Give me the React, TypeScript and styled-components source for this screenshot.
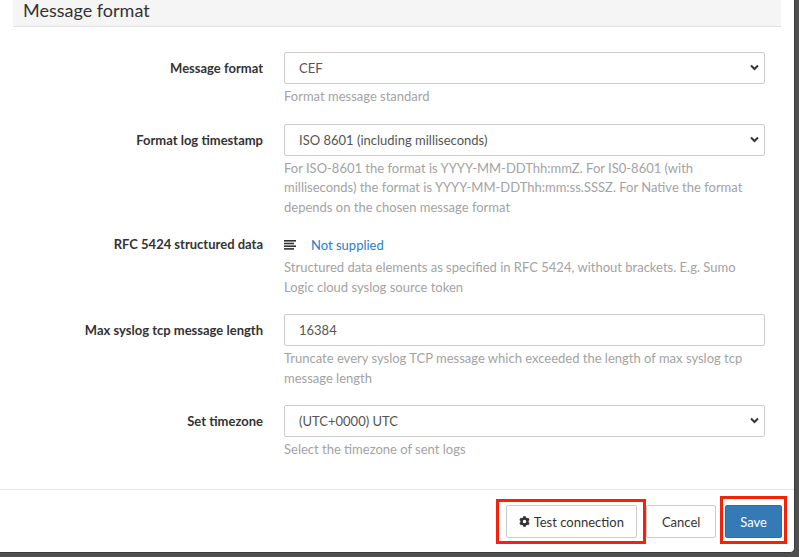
import * as React from 'react';
import styled, { createGlobalStyle } from 'styled-components';
import { FaCog } from 'react-icons/fa';

const GlobalStyle = createGlobalStyle`
  html, body {
    margin: 0;
    padding: 0;
    background: #4f4f4f;
    font-family: Lato, "Open Sans", "Liberation Sans", sans-serif;
    font-size: 13px;
    color: #333;
  }
  * { box-sizing: border-box; }
`;

const Backdrop = styled.div`
  width: 799px;
  height: 557px;
  background: #4f4f4f;
  overflow: hidden;
`;

const Modal = styled.div`
  width: 795px;
  height: 553px;
  background: #fff;
  border-right: 1px solid #3a3a3a;
  border-bottom: 1px solid #3a3a3a;
  border-bottom-right-radius: 5px;
  display: flex;
  flex-direction: column;
`;

const Body = styled.div`
  flex: 1;
  padding: 0 13px 0 13px;
`;

const SectionHeader = styled.div`
  height: 27px;
  width: 768px;
  background: #f5f5f5;
  border-bottom: 1px solid #e3e3e3;
  padding-left: 10px;
  font-size: 18px;
  line-height: 21px;
  color: #333;
`;

const Form = styled.div`
  padding-top: 25px;
  padding-right: 16px;
`;

const Row = styled.div`
  display: grid;
  grid-template-columns: 250px 1fr;
  column-gap: 21px;
  margin-bottom: 17px;
`;

const Label = styled.div<{ $static?: boolean }>`
  text-align: right;
  font-weight: 700;
  font-size: 13px;
  line-height: ${(p) => (p.$static ? '19px' : '32px')};
  margin-top: ${(p) => (p.$static ? '1px' : '0')};
  color: #333;
`;

const Field = styled.div`
  min-width: 0;
`;

const SelectWrap = styled.div`
  position: relative;
`;

const Select = styled.select`
  appearance: none;
  -webkit-appearance: none;
  width: 100%;
  height: 32px;
  border: 1px solid #ccc;
  border-radius: 2px;
  background: #fff;
  padding: 0 30px 0 14px;
  font-family: inherit;
  font-size: 13px;
  color: #555;
  outline: none;
`;

const Chevron = styled.svg`
  position: absolute;
  right: 6px;
  top: 12px;
  width: 9px;
  height: 7px;
  pointer-events: none;
`;

const Input = styled.input`
  width: 100%;
  height: 32px;
  border: 1px solid #ccc;
  border-radius: 2px;
  background: #fff;
  padding: 0 14px;
  font-family: inherit;
  font-size: 13px;
  color: #555;
  outline: none;
`;

const Help = styled.div`
  margin-top: 3px;
  font-size: 13px;
  line-height: 19.5px;
  color: #a3a3a3;
`;

const StaticValue = styled.div`
  display: flex;
  align-items: center;
  gap: 14px;
  height: 20px;
  margin-top: 1px;
  font-size: 13px;
  color: #2e7bc4;
`;

const Footer = styled.div`
  border-top: 1px solid #e5e5e5;
  height: 63px;
  display: flex;
  justify-content: flex-end;
  align-items: flex-start;
  gap: 9px;
  padding: 15px 12px 0 0;
`;

const Button = styled.button<{ $primary?: boolean; $pad?: number }>`
  height: 33px;
  padding: 0 ${(p) => p.$pad ?? 12}px;
  border-radius: 2px;
  border: 1px solid ${(p) => (p.$primary ? '#2e6da4' : '#ccc')};
  background: ${(p) => (p.$primary ? '#337ab7' : '#fff')};
  color: ${(p) => (p.$primary ? '#fff' : '#333')};
  font-family: inherit;
  font-size: 13px;
  display: inline-flex;
  align-items: center;
  gap: 4px;
  cursor: pointer;
`;

const Highlight = styled.div<{ $t: number; $r: number; $b: number; $l: number }>`
  position: relative;
  display: inline-flex;
  &::after {
    content: '';
    position: absolute;
    top: ${(p) => -p.$t}px;
    right: ${(p) => -p.$r}px;
    bottom: ${(p) => -p.$b}px;
    left: ${(p) => -p.$l}px;
    border: 3px solid #f3230b;
    pointer-events: none;
  }
`;

const ChevronDown = () => (
  <Chevron viewBox="0 0 9 7">
    <path d="M1 1.5 L4.5 5 L8 1.5" fill="none" stroke="#333" strokeWidth="2" />
  </Chevron>
);

const LinesIcon = () => (
  <svg width="13" height="10" viewBox="0 0 13 10">
    <rect x="0" y="0" width="12" height="1.6" fill="#333" />
    <rect x="0" y="2.7" width="10" height="1.6" fill="#333" />
    <rect x="0" y="5.4" width="12" height="1.6" fill="#333" />
    <rect x="0" y="8.1" width="10" height="1.6" fill="#333" />
  </svg>
);

const SelectField: React.FC<{ value: string; options: string[] }> = ({ value, options }) => (
  <SelectWrap>
    <Select defaultValue={value}>
      {options.map((o) => (
        <option key={o}>{o}</option>
      ))}
    </Select>
    <ChevronDown />
  </SelectWrap>
);

const App: React.FC = () => {
  return (
    <>
      <GlobalStyle />
      <Backdrop>
        <Modal>
          <Body>
            <SectionHeader>Message format</SectionHeader>
            <Form>
              <Row>
                <Label>Message format</Label>
                <Field>
                  <SelectField value="CEF" options={['CEF', 'LEEF', 'JSON']} />
                  <Help>Format message standard</Help>
                </Field>
              </Row>
              <Row>
                <Label>Format log timestamp</Label>
                <Field>
                  <SelectField
                    value="ISO 8601 (including milliseconds)"
                    options={['ISO 8601', 'ISO 8601 (including milliseconds)', 'Native']}
                  />
                  <Help>
                    For ISO-8601 the format is YYYY-MM-DDThh:mmZ. For IS0-8601 (with milliseconds) the format is
                    YYYY-MM-DDThh:mm:ss.SSSZ. For Native the format depends on the chosen message format
                  </Help>
                </Field>
              </Row>
              <Row>
                <Label $static>RFC 5424 structured data</Label>
                <Field>
                  <StaticValue>
                    <LinesIcon />
                    <span>Not supplied</span>
                  </StaticValue>
                  <Help>
                    Structured data elements as specified in RFC 5424, without brackets. E.g. Sumo Logic cloud
                    syslog source token
                  </Help>
                </Field>
              </Row>
              <Row>
                <Label>Max syslog tcp message length</Label>
                <Field>
                  <Input defaultValue="16384" />
                  <Help>
                    Truncate every syslog TCP message which exceeded the length of max syslog tcp message length
                  </Help>
                </Field>
              </Row>
              <Row>
                <Label>Set timezone</Label>
                <Field>
                  <SelectField value="(UTC+0000) UTC" options={['(UTC+0000) UTC', '(UTC+0100) Europe/Paris']} />
                  <Help>Select the timezone of sent logs</Help>
                </Field>
              </Row>
            </Form>
          </Body>
          <Footer>
            <Highlight $t={6} $r={9} $b={6} $l={10}>
              <Button>
                <FaCog size={11} />
                Test connection
              </Button>
            </Highlight>
            <Button $pad={15}>Cancel</Button>
            <Highlight $t={9} $r={5} $b={6} $l={5}>
              <Button $primary $pad={14}>
                Save
              </Button>
            </Highlight>
          </Footer>
        </Modal>
      </Backdrop>
    </>
  );
};

export default App;
